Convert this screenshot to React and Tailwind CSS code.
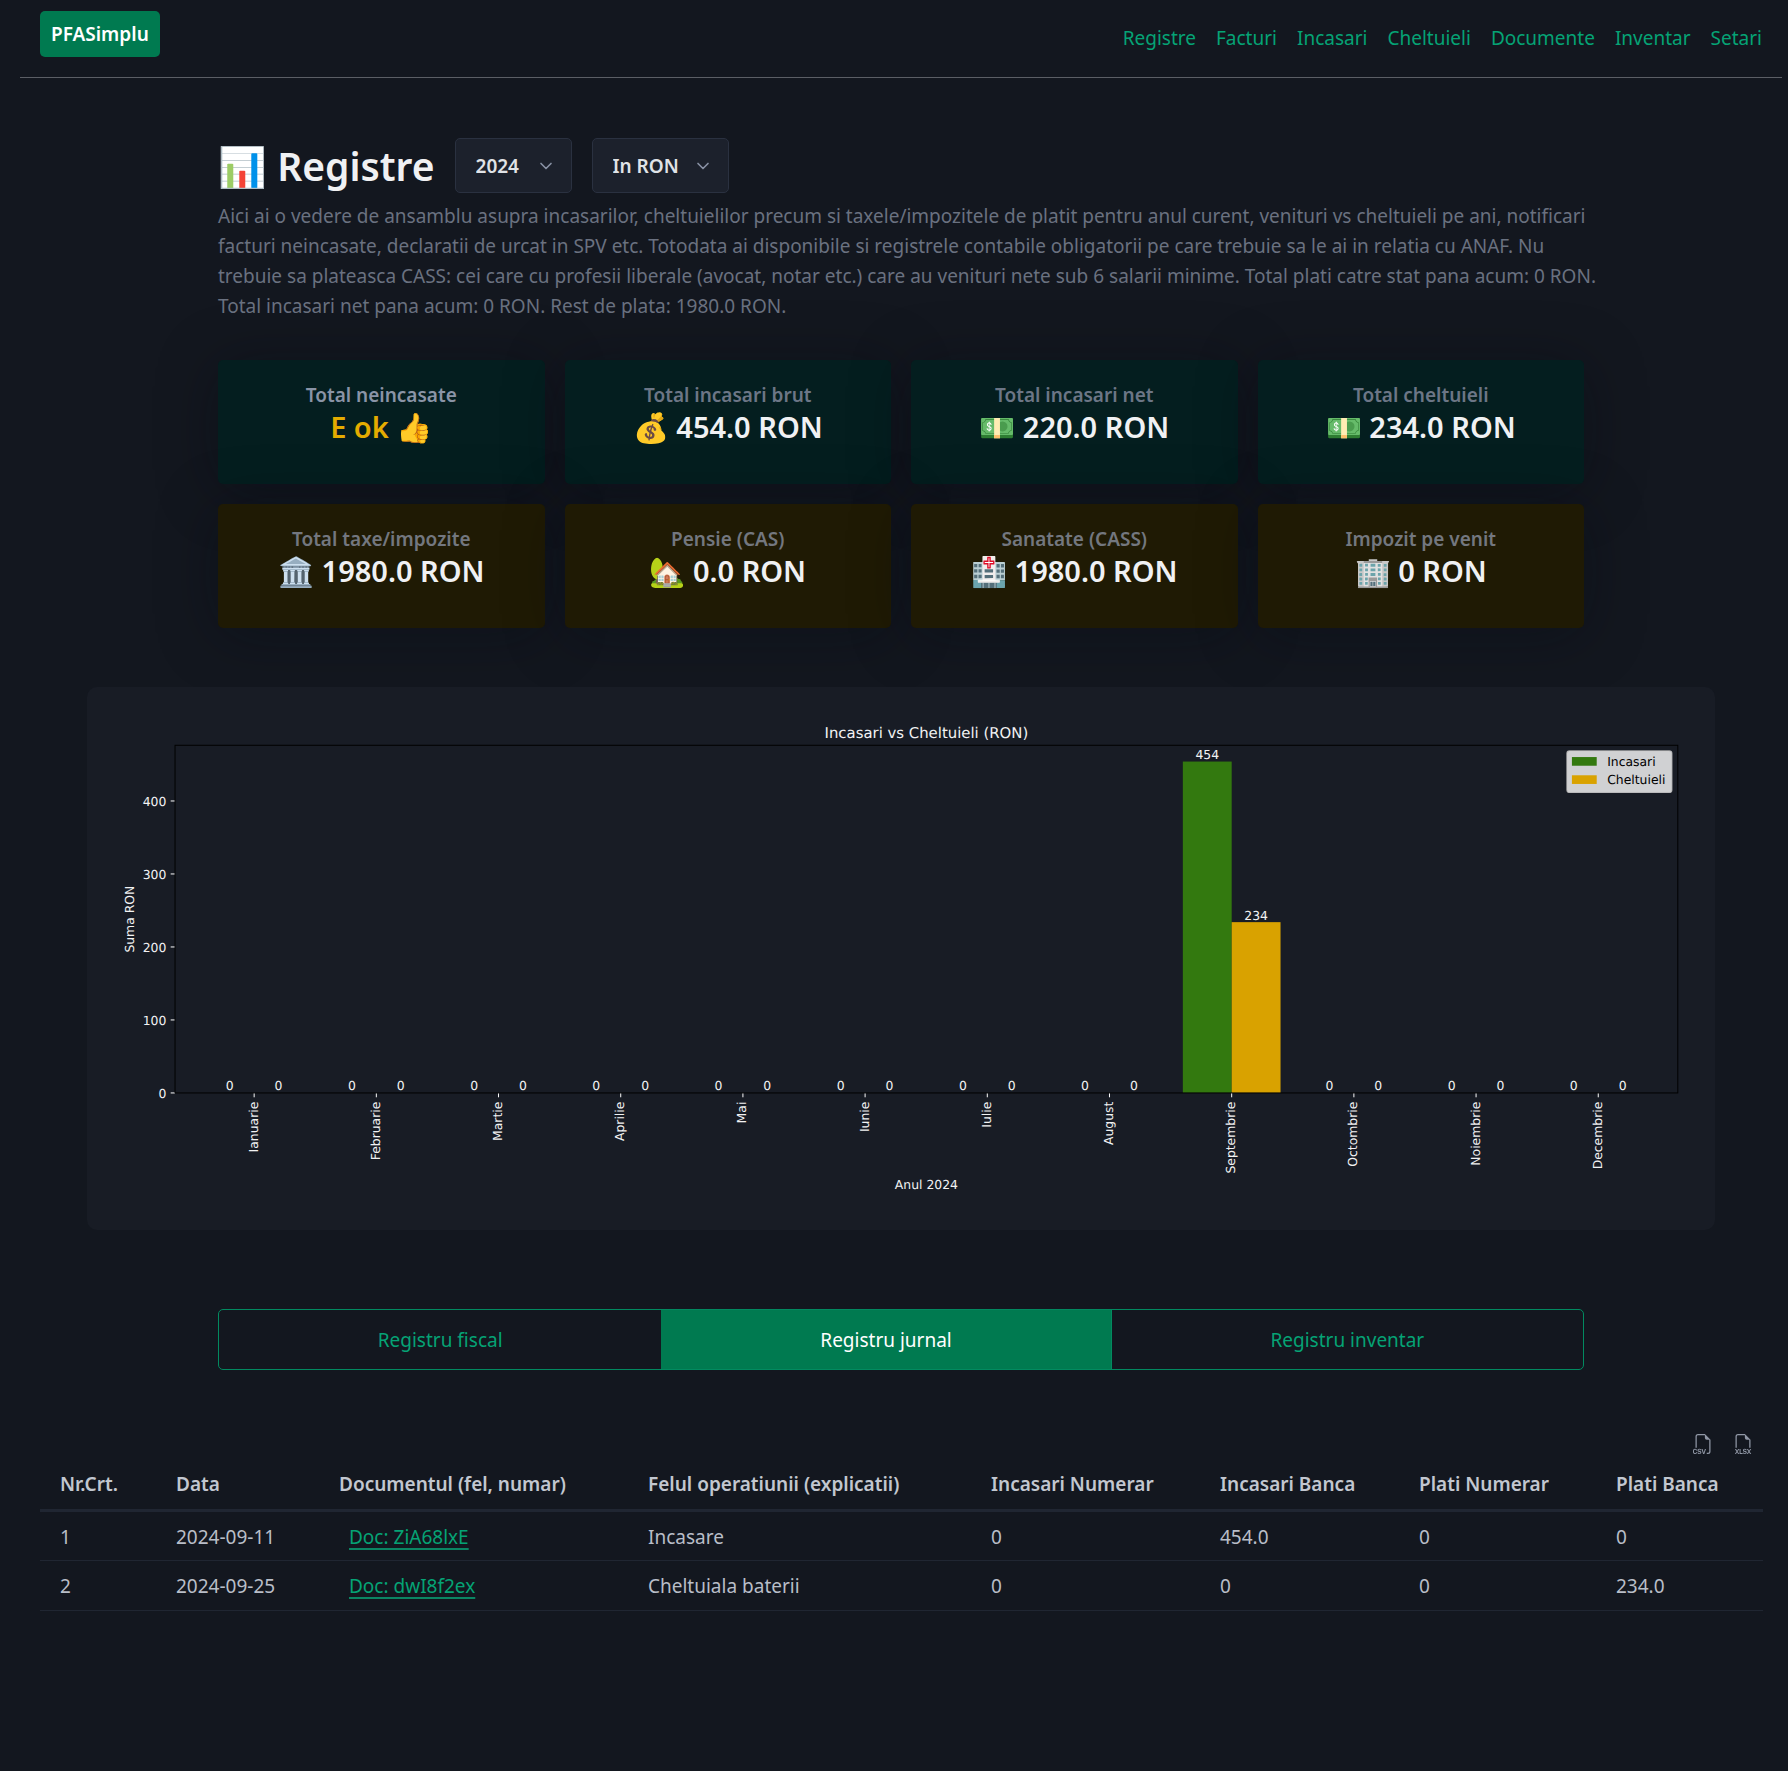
import React from "react";
import { BsFiletypeCsv, BsFiletypeXlsx } from "react-icons/bs";
import { ChevronDown } from "lucide-react";

const NAV = ["Registre", "Facturi", "Incasari", "Cheltuieli", "Documente", "Inventar", "Setari"];

const CARDS = [
  { label: "Total neincasate", value: "E ok 👍", box: "bg-[#041e1f]", tone: "text-[#8a94a6]", amount: "text-[#e5ac00]" },
  { label: "Total incasari brut", value: "💰 454.0 RON", box: "bg-[#041e1f]", tone: "text-[#6c7686]", amount: "text-[#f0f1f3]" },
  { label: "Total incasari net", value: "💵 220.0 RON", box: "bg-[#041e1f]", tone: "text-[#6c7686]", amount: "text-[#f0f1f3]" },
  { label: "Total cheltuieli", value: "💵 234.0 RON", box: "bg-[#041e1f]", tone: "text-[#6c7686]", amount: "text-[#f0f1f3]" },
  { label: "Total taxe/impozite", value: "🏛️ 1980.0 RON", box: "bg-[#1f1a04]", tone: "text-[#73777f]", amount: "text-[#f0f1f3]" },
  { label: "Pensie (CAS)", value: "🏡 0.0 RON", box: "bg-[#1f1a04]", tone: "text-[#73777f]", amount: "text-[#f0f1f3]" },
  { label: "Sanatate (CASS)", value: "🏥 1980.0 RON", box: "bg-[#1f1a04]", tone: "text-[#73777f]", amount: "text-[#f0f1f3]" },
  { label: "Impozit pe venit", value: "🏢 0 RON", box: "bg-[#1f1a04]", tone: "text-[#73777f]", amount: "text-[#f0f1f3]" },
];

const MONTHS = [
  ["Ianuarie", 0, 0],
  ["Februarie", 0, 0],
  ["Martie", 0, 0],
  ["Aprilie", 0, 0],
  ["Mai", 0, 0],
  ["Iunie", 0, 0],
  ["Iulie", 0, 0],
  ["August", 0, 0],
  ["Septembrie", 454, 234],
  ["Octombrie", 0, 0],
  ["Noiembrie", 0, 0],
  ["Decembrie", 0, 0],
];

const COLUMNS = [
  ["Nr.Crt.", "w-[116px]"],
  ["Data", "w-[163px]"],
  ["Documentul (fel, numar)", "w-[309px]"],
  ["Felul operatiunii (explicatii)", "w-[343px]"],
  ["Incasari Numerar", "w-[229px]"],
  ["Incasari Banca", "w-[199px]"],
  ["Plati Numerar", "w-[197px]"],
  ["Plati Banca", "w-[167px]"],
];

const ROWS = [
  ["1", "2024-09-11", "Doc: ZiA68lxE", "Incasare", "0", "454.0", "0", "0"],
  ["2", "2024-09-25", "Doc: dwI8f2ex", "Cheltuiala baterii", "0", "0", "0", "234.0"],
];

function Picker({ label, options, className }) {
  return (
    <div className="grid items-center">
      <select
        aria-label={label}
        className={`col-start-1 row-start-1 h-[55px] appearance-none rounded-[5px] border border-[#2a3140] bg-[#1c212c] pl-5 text-[19px] font-semibold text-[#e0e3e7] ${className}`}
      >
        {options.map((o) => (
          <option key={o}>{o}</option>
        ))}
      </select>
      <ChevronDown
        size={20}
        strokeWidth={2}
        className="pointer-events-none col-start-1 row-start-1 mr-4 justify-self-end text-[#8891a4]"
      />
    </div>
  );
}

function Chart() {
  const left = 71;
  const right = 1283;
  const top = 47;
  const base = 327.4;
  const unit = 0.5887;
  const first = 134.8;
  const step = 98.55;
  const bar = 39.4;
  const mid = (left + right) / 2;
  return (
    <svg
      viewBox="0 0 1313 438"
      className="block w-full"
      fontFamily="DejaVu Sans, sans-serif"
      fontSize="10"
      fill="#f2f2f3"
      textAnchor="middle"
      textRendering="geometricPrecision"
      role="img"
      aria-label="Incasari vs Cheltuieli (RON)"
    >
      <text x={mid} y={40.8} fontSize="12">Incasari vs Cheltuieli (RON)</text>
      {MONTHS.map(([name, a, b], i) => {
        const x = first + i * step;
        return (
          <g key={name}>
            <rect x={x - bar} y={base - a * unit} width={bar} height={a * unit} fill="#33790f" />
            <rect x={x} y={base - b * unit} width={bar} height={b * unit} fill="#d9a200" />
            <text x={x - bar / 2} y={base - a * unit - 2}>{a}</text>
            <text x={x + bar / 2} y={base - b * unit - 2}>{b}</text>
            <line x1={x} x2={x} y1={base} y2={base + 3.5} stroke="#fff" strokeWidth="0.8" />
            <text transform={`translate(${x + 2.8} ${base + 7}) rotate(-90)`} textAnchor="end">{name}</text>
          </g>
        );
      })}
      {[0, 100, 200, 300, 400].map((v) => (
        <g key={v}>
          <line x1={left - 3.5} x2={left} y1={base - v * unit} y2={base - v * unit} stroke="#fff" strokeWidth="0.8" />
          <text x={left - 7} y={base - v * unit + 3.8} textAnchor="end">{v}</text>
        </g>
      ))}
      <rect x={left} y={top} width={right - left} height={base - top} fill="none" stroke="#000" strokeWidth="0.8" />
      <text transform={`translate(38 ${(top + base) / 2}) rotate(-90)`}>Suma RON</text>
      <text x={mid} y={405}>Anul 2024</text>
      <g textAnchor="start">
        <rect x="1193.6" y="51.6" width="84.6" height="33.4" rx="2" fill="#fff" fillOpacity="0.8" stroke="#ccc" strokeOpacity="0.8" />
        <rect x="1197.6" y="56.5" width="20" height="7" fill="#33790f" />
        <rect x="1197.6" y="71.2" width="20" height="7" fill="#d9a200" />
        <text x="1226" y="63.7" fill="#000">Incasari</text>
        <text x="1226" y="78.4" fill="#000">Cheltuieli</text>
      </g>
    </svg>
  );
}

export default function App() {
  return (
    <div className="min-h-screen bg-[#13171f] pl-5 pr-[6px] font-['Noto_Sans',sans-serif] text-[19px] leading-[30px] text-[#c2c7d0]">
      <header className="flex items-start justify-between border-b border-[#5b5e65] px-5 pb-5 pt-[11px]">
        <a href="#" className="flex h-[46px] items-center rounded-[5px] bg-[#007a50] px-[11px] text-[19px] font-semibold text-white">
          PFASimplu
        </a>
        <nav className="flex gap-5 pt-3 text-[#05a375]">
          {NAV.map((n) => (
            <a key={n} href="#">{n}</a>
          ))}
        </nav>
      </header>

      <main>
        <section className="mx-auto mt-[60px] max-w-[1366px]">
          <div className="flex items-center gap-5">
            <h1 className="text-[39px] font-semibold leading-[54px] text-[#f0f1f3]">📊 Registre</h1>
            <Picker label="Anul" options={["2024", "2023"]} className="w-[117px]" />
            <Picker label="Moneda" options={["In RON", "In EUR"]} className="w-[137px]" />
          </div>
          <p className="mt-2 text-[#6a7180] 2xl:-mr-6">
            Aici ai o vedere de ansamblu asupra incasarilor, cheltuielilor precum si taxele/impozitele de platit pentru anul curent, venituri vs cheltuieli pe ani, notificari <br className="max-2xl:hidden" />
            facturi neincasate, declaratii de urcat in SPV etc. Totodata ai disponibile si registrele contabile obligatorii pe care trebuie sa le ai in relatia cu ANAF. Nu <br className="max-2xl:hidden" />
            trebuie sa plateasca CASS: cei care cu profesii liberale (avocat, notar etc.) care au venituri nete sub 6 salarii minime. Total plati catre stat pana acum: 0 RON. <br className="max-2xl:hidden" />
            Total incasari net pana acum: 0 RON. Rest de plata: 1980.0 RON.
          </p>
          <div className="mt-[39px] grid grid-cols-4 gap-5">
            {CARDS.map((c) => (
              <article
                key={c.label}
                className={`h-[124px] rounded-[5px] pt-5 text-center shadow-[0_6px_60px_rgba(7,9,18,0.35)] ${c.box}`}
              >
                <h2 className={`text-[19px] font-semibold leading-[30px] ${c.tone}`}>{c.label}</h2>
                <p className={`text-[29px] font-semibold leading-[34px] ${c.amount}`}>{c.value}</p>
              </article>
            ))}
          </div>
        </section>

        <section className="relative mx-auto mt-[59px] max-w-[1628px] rounded-[10px] bg-[#181c25]">
          <Chart />
        </section>

        <div role="group" className="mx-auto mt-[79px] flex h-[61px] max-w-[1366px] overflow-hidden rounded-[5px] border border-[#028a60] text-[#05a375]">
          <button className="grow-[443] basis-0">Registru fiscal</button>
          <button className="grow-[450] basis-0 bg-[#007a50] text-white">Registru jurnal</button>
          <button className="grow-[472] basis-0 border-l border-[#028a60]">Registru inventar</button>
        </div>

        <section className="px-5 pb-40 pt-16">
          <div className="flex justify-end gap-5 pr-[9px] text-[#9097a5]">
            <button aria-label="Descarca CSV"><BsFiletypeCsv size={20} /></button>
            <button aria-label="Descarca XLSX"><BsFiletypeXlsx size={20} /></button>
          </div>
          <table className="mt-[5px] w-full table-fixed border-collapse text-left">
            <thead>
              <tr className="border-b-[3px] border-[#202632]">
                {COLUMNS.map(([name, w]) => (
                  <th key={name} scope="col" className={`whitespace-nowrap px-5 py-[10px] text-[19px] font-semibold ${w}`}>{name}</th>
                ))}
              </tr>
            </thead>
            <tbody>
              {ROWS.map((r) => (
                <tr key={r[0]} className="border-b border-[#202632]">
                  {r.map((v, i) => (
                    <td key={i} className="h-[50px] px-5 pt-px text-[19px] text-[#b9bec8]">
                      {i === 2 ? (
                        <a href="#" className="ml-[10px] text-[#05a375] underline decoration-[#0b8563] decoration-2 underline-offset-4">{v}</a>
                      ) : (
                        v
                      )}
                    </td>
                  ))}
                </tr>
              ))}
            </tbody>
          </table>
        </section>
      </main>
    </div>
  );
}
